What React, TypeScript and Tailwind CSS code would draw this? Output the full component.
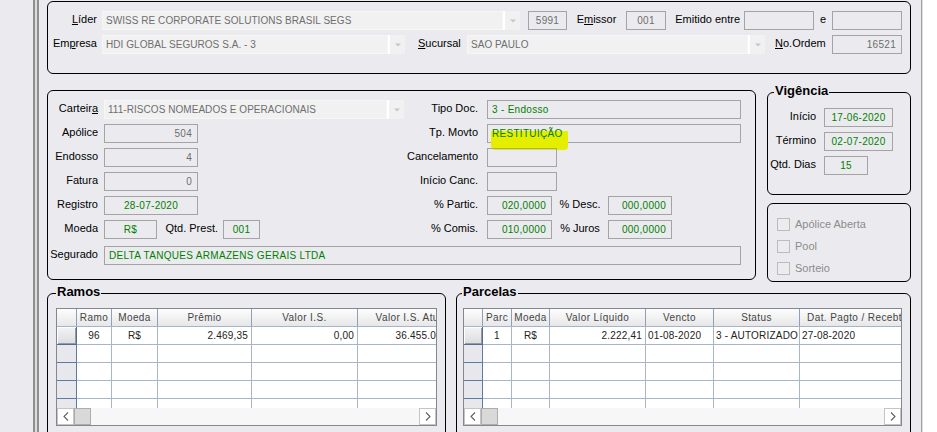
import React from "react";

type Align = "left" | "center" | "right";

function Label({ className = "", children }: { className?: string; children: React.ReactNode }) {
  return (
    <div className={`shrink-0 whitespace-nowrap pb-[2px] text-[11px] leading-[13px] text-black ${className}`}>
      {children}
    </div>
  );
}

function Field({
  className = "",
  children,
  align = "left",
  green = false,
}: {
  className?: string;
  children?: React.ReactNode;
  align?: Align;
  green?: boolean;
}) {
  const a =
    align === "right" ? "justify-end pr-[5px]" : align === "center" ? "justify-center" : "justify-start pl-[4px]";
  const t = green ? "text-[#008000]" : "text-[#6d6d6d]";
  return (
    <div
      className={`relative flex h-[19px] shrink-0 items-center whitespace-nowrap border border-[#a4a4a4] text-[10px] tracking-[0.3px] ${a} ${t} ${className}`}
    >
      {children}
    </div>
  );
}

function Combo({ className = "", text }: { className?: string; text: string }) {
  return (
    <div className={`flex h-[19px] shrink-0 bg-[#f1f1f2] ${className}`}>
      <div className="flex flex-1 items-center whitespace-nowrap border border-[#f6f6f6] pl-[3px] text-[10px] tracking-[0.05px] text-[#6e6e6e]">
        {text}
      </div>
      <div className="w-[2px] bg-white" />
      <div className="flex w-[15px] items-center justify-center">
        <svg width="6" height="4" viewBox="0 0 6 4">
          <path d="M0 0.5h6L3 3.5z" fill="#c6c6c6" />
        </svg>
      </div>
    </div>
  );
}

function Group({
  className = "",
  title,
  titleLeft = "left-[8px]",
  children,
}: {
  className?: string;
  title?: string;
  titleLeft?: string;
  children?: React.ReactNode;
}) {
  return (
    <div className={`relative shrink-0 rounded-[6px] border border-black ${className}`}>
      {title && (
        <div
          className={`absolute top-[-10px] ${titleLeft} bg-[#ebebef] px-[1px] text-[13px] font-bold leading-[16px] text-black`}
        >
          {title}
        </div>
      )}
      {children}
    </div>
  );
}

function Check({ label }: { label: string }) {
  return (
    <div className="flex h-[13px] items-center">
      <div className="h-[13px] w-[13px] shrink-0 border border-[#bcbcbc] bg-[#ececee]" />
      <span className="ml-[5px] text-[11px] leading-[13px] text-[#8c8c8c]">{label}</span>
    </div>
  );
}

type Col = { w: string; label: string; align: Align; value: string };

function Chevron({ dir }: { dir: "l" | "r" }) {
  return (
    <svg width="6" height="9" viewBox="0 0 6 9">
      <path
        d={dir === "l" ? "M5 0.5L1 4.5L5 8.5" : "M1 0.5L5 4.5L1 8.5"}
        fill="none"
        stroke="#606060"
        strokeWidth="1.1"
      />
    </svg>
  );
}

function Grid({ className = "", hdr, cols }: { className?: string; hdr: string; cols: Col[] }) {
  const al = (a: Align) =>
    a === "right" ? "justify-end pr-[3px]" : a === "center" ? "justify-center" : "justify-start pl-[2px]";
  return (
    <div className={`flex h-[118px] shrink-0 flex-col overflow-hidden border border-[#828790] bg-white ${className}`}>
      <div className="h-[99px] overflow-hidden">
        <div className="flex h-[18px] border-b border-[#a7b3c6] bg-gradient-to-b from-[#fdfdfd] to-[#e7e7e9]">
          <div className={`${hdr} shrink-0 border-r border-[#8d9fbb]`} />
          {cols.map((c) => (
            <div
              key={c.label}
              className={`${c.w} flex shrink-0 items-center justify-center overflow-hidden whitespace-nowrap border-r border-[#8d9fbb] text-[10px] tracking-[0.4px] text-[#444]`}
            >
              {c.label}
            </div>
          ))}
        </div>
        {[0, 1, 2, 3, 4].map((r) => (
          <div key={r} className="flex h-[18px]">
            <div
              className={`${hdr} shrink-0 border-b border-r ${
                r === 0
                  ? "border-[#4f6d99] bg-gradient-to-b from-[#f4f4f6] to-[#dcdce0] shadow-[inset_1px_1px_0_#ffffff,inset_-1px_-1px_0_#9a9a9a]"
                  : "border-[#5d7aa6] bg-[#e8e8ec]"
              }`}
            />
            {cols.map((c) => (
              <div
                key={c.label}
                className={`${c.w} flex shrink-0 items-center overflow-hidden whitespace-nowrap border-b border-r border-[#a8b5c9] text-[10px] tracking-[0.2px] text-[#222] ${al(
                  c.align
                )}`}
              >
                {r === 0 ? c.value : ""}
              </div>
            ))}
          </div>
        ))}
      </div>
      <div className="flex h-[17px] shrink-0 bg-[#f7f7f7]">
        <div className="flex w-[17px] shrink-0 items-center justify-center border border-[#c4c4c4] bg-white">
          <Chevron dir="l" />
        </div>
        <div className="w-[17px] shrink-0 border border-[#adadad] bg-[#d9d9d9]" />
        <div className="flex-1" />
        <div className="flex w-[17px] shrink-0 items-center justify-center border border-[#c4c4c4] bg-white">
          <Chevron dir="r" />
        </div>
      </div>
    </div>
  );
}

const ramos: Col[] = [
  { w: "w-[35px]", label: "Ramo", align: "center", value: "96" },
  { w: "w-[46px]", label: "Moeda", align: "center", value: "R$" },
  { w: "w-[94px]", label: "Prêmio", align: "right", value: "2.469,35" },
  { w: "w-[106px]", label: "Valor I.S.", align: "right", value: "0,00" },
  { w: "w-[108px]", label: "Valor I.S. Atual", align: "right", value: "36.455.000,00" },
];

const parcelas: Col[] = [
  { w: "w-[29px]", label: "Parc", align: "center", value: "1" },
  { w: "w-[38px]", label: "Moeda", align: "center", value: "R$" },
  { w: "w-[96px]", label: "Valor Líquido", align: "right", value: "2.222,41" },
  { w: "w-[68px]", label: "Vencto", align: "left", value: "01-08-2020" },
  { w: "w-[86px]", label: "Status", align: "left", value: "3 - AUTORIZADO" },
  { w: "w-[116px]", label: "Dat. Pagto / Recebto", align: "left", value: "27-08-2020" },
];

export default function App() {
  return (
    <div className="flex h-[432px] w-[937px] overflow-hidden bg-[#ebebef] font-['Liberation_Sans',Arial,sans-serif] text-[11px] text-black">
      <div className="w-[33px] shrink-0" />
      <div className="w-[2px] shrink-0 bg-[#8f8f8f]" />
      <div className="w-[2px] shrink-0 bg-[#dcdcdc]" />
      <div className="w-[2px] shrink-0 bg-[#8f8f8f]" />

      <div className="flex w-[882px] shrink-0 flex-col pl-[8px] pt-[1px]">
        {/* Top box */}
        <Group className="h-[73px] w-[864px] pt-[9px]">
          <div className="flex h-[19px] items-center">
            <Label className="w-[54px] pr-[5px] text-right">
              <span className="underline">L</span>íder
            </Label>
            <Combo className="w-[418px]" text="SWISS RE CORPORATE SOLUTIONS BRASIL SEGS" />
            <Field className="ml-[8px] w-[39px]" align="center">
              5991
            </Field>
            <Label className="w-[59px] text-center">
              E<span className="underline">m</span>issor
            </Label>
            <Field className="w-[40px]" align="center">
              001
            </Field>
            <Label className="w-[78px] pr-[4px] text-right">Emitido entre</Label>
            <Field className="w-[70px]" />
            <Label className="w-[18px] text-center">e</Label>
            <Field className="w-[70px]" />
          </div>
          <div className="mt-[5px] flex h-[19px] items-center">
            <Label className="w-[54px] pr-[5px] text-right">
              Em<span className="underline">p</span>resa
            </Label>
            <Combo className="w-[303px]" text="HDI GLOBAL SEGUROS S.A. - 3" />
            <Label className="w-[62px] pl-[13px]">
              <span className="underline">S</span>ucursal
            </Label>
            <Combo className="w-[298px]" text="SAO PAULO" />
            <Label className="w-[67px] pl-[10px]">
              <span className="underline">N</span>o.Ordem
            </Label>
            <Field className="w-[70px]" align="right">
              16521
            </Field>
          </div>
        </Group>

        {/* Middle */}
        <div className="mt-[16px] flex">
          <Group className="h-[190px] w-[709px] pt-[9px]">
            <div className="flex h-[19px] items-center">
              <Label className="w-[56px] pr-[6px] text-right">
                Carteir<span className="underline">a</span>
              </Label>
              <Combo className="w-[300px]" text="111-RISCOS NOMEADOS E OPERACIONAIS" />
              <Label className="w-[83px] pr-[9px] text-right">Tipo Doc.</Label>
              <Field className="w-[254px]" green>
                3 - Endosso
              </Field>
            </div>
            <div className="mt-[5px] flex h-[19px] items-center">
              <Label className="w-[56px] pr-[6px] text-right">Apólice</Label>
              <div className="flex w-[300px] shrink-0">
                <Field className="w-[94px]" align="right">
                  504
                </Field>
              </div>
              <Label className="w-[83px] pr-[9px] text-right">Tp. Movto</Label>
              <Field className="w-[254px]" green>
                <div className="absolute left-[3px] top-[6px] h-[19px] w-[77px] rounded-b-[4px] rounded-t-[1px] bg-[#e6ee00]" />
                <span className="relative">RESTITUIÇÃO</span>
              </Field>
            </div>
            <div className="mt-[5px] flex h-[19px] items-center">
              <Label className="w-[56px] pr-[6px] text-right">Endosso</Label>
              <div className="flex w-[300px] shrink-0">
                <Field className="w-[94px]" align="right">
                  4
                </Field>
              </div>
              <Label className="w-[83px] pr-[9px] text-right">Cancelamento</Label>
              <Field className="w-[70px]" />
            </div>
            <div className="mt-[5px] flex h-[19px] items-center">
              <Label className="w-[56px] pr-[6px] text-right">Fatura</Label>
              <div className="flex w-[300px] shrink-0">
                <Field className="w-[94px]" align="right">
                  0
                </Field>
              </div>
              <Label className="w-[83px] pr-[9px] text-right">Início Canc.</Label>
              <Field className="w-[70px]" />
            </div>
            <div className="mt-[5px] flex h-[19px] items-center">
              <Label className="w-[56px] pr-[6px] text-right">Registro</Label>
              <div className="flex w-[300px] shrink-0">
                <Field className="w-[94px]" align="center" green>
                  28-07-2020
                </Field>
              </div>
              <Label className="w-[83px] pr-[9px] text-right">% Partic.</Label>
              <Field className="w-[65px]" align="right" green>
                020,0000
              </Field>
              <Label className="w-[56px] text-center">% Desc.</Label>
              <Field className="w-[64px]" align="right" green>
                000,0000
              </Field>
            </div>
            <div className="mt-[5px] flex h-[19px] items-center">
              <Label className="w-[56px] pr-[6px] text-right">Moeda</Label>
              <div className="flex w-[300px] shrink-0 items-center">
                <Field className="w-[53px]" align="center" green>
                  R$
                </Field>
                <Label className="w-[66px] pr-[5px] text-right">Qtd. Prest.</Label>
                <Field className="w-[37px]" align="center" green>
                  001
                </Field>
              </div>
              <Label className="w-[83px] pr-[9px] text-right">% Comis.</Label>
              <Field className="w-[65px]" align="right" green>
                010,0000
              </Field>
              <Label className="w-[56px] text-center">% Juros</Label>
              <Field className="w-[64px]" align="right" green>
                000,0000
              </Field>
            </div>
            <div className="mt-[7px] flex h-[19px] items-center">
              <Label className="w-[56px] pr-[6px] text-right">Segurado</Label>
              <Field className="w-[637px]" green>
                DELTA TANQUES ARMAZENS GERAIS LTDA
              </Field>
            </div>
          </Group>

          <div className="ml-[11px] flex w-[144px] shrink-0 flex-col pt-[2px]">
            <Group className="h-[103px] w-[144px] pt-[15px]" title="Vigência" titleLeft="left-[6px]">
              <div className="flex h-[19px] items-center">
                <Label className="w-[56px] pr-[8px] text-right">Início</Label>
                <Field className="w-[69px]" align="center" green>
                  17-06-2020
                </Field>
              </div>
              <div className="mt-[5px] flex h-[19px] items-center">
                <Label className="w-[56px] pr-[8px] text-right">Término</Label>
                <Field className="w-[69px]" align="center" green>
                  02-07-2020
                </Field>
              </div>
              <div className="mt-[5px] flex h-[19px] items-center">
                <Label className="w-[56px] pr-[8px] text-right">Qtd. Dias</Label>
                <Field className="w-[44px]" align="center" green>
                  15
                </Field>
              </div>
            </Group>
            <Group className="mt-[8px] flex h-[79px] w-[144px] flex-col gap-[9px] pl-[9px] pt-[14px]">
              <Check label="Apólice Aberta" />
              <Check label="Pool" />
              <Check label="Sorteio" />
            </Group>
          </div>
        </div>

        {/* Bottom */}
        <div className="mt-[11px] flex">
          <Group className="h-[150px] w-[399px] pl-[8px] pt-[14px]" title="Ramos">
            <Grid className="w-[381px]" hdr="w-[20px]" cols={ramos} />
          </Group>
          <Group className="ml-[10px] h-[150px] w-[455px] pl-[6px] pt-[14px]" title="Parcelas" titleLeft="left-[5px]">
            <Grid className="w-[439px]" hdr="w-[19px]" cols={parcelas} />
          </Group>
        </div>
      </div>

      <div className="w-px shrink-0 bg-[#a0a0a0]" />
      <div className="w-px shrink-0 bg-[#dedede]" />
      <div className="flex-1 bg-white" />
    </div>
  );
}
